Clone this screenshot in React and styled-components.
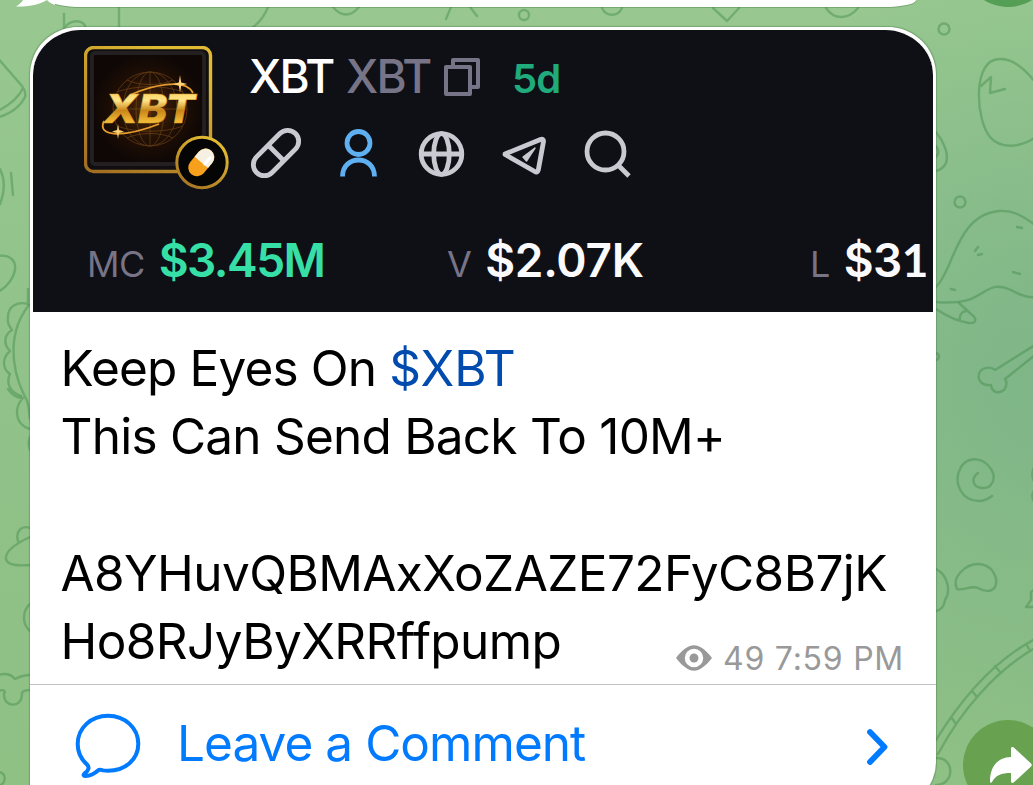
import styled, { createGlobalStyle } from "styled-components";

const GlobalStyle = createGlobalStyle`
  * {
    box-sizing: border-box;
  }

  body {
    margin: 0;
    overflow: hidden;
    font-family: "Inter", "Liberation Sans", sans-serif;
  }
`;

export default function App() {
  return (
    <>
      <GlobalStyle />
      <Chat>
        <Wallpaper />
        <PreviousBubble>
          <PreviousTail />
        </PreviousBubble>
        <ShareButton $top={-83} />
        <Bubble>
          <TokenCard>
            <TokenHeader>
              <TokenLogo />
              <TokenInfo>
                <TokenTitle>
                  <Ticker>XBT</Ticker>
                  <Ticker $muted>XBT</Ticker>
                  <CopyIcon />
                  <Age>5d</Age>
                </TokenTitle>
                <TokenLinks />
              </TokenInfo>
            </TokenHeader>
            <Stats>
              <Stat $width={360} $spacing="-1.5px" label="MC" value="$3.45M" $green />
              <Stat $width={363} $spacing="-0.3px" label="V" value="$2.07K" />
              <Stat
                $width={140}
                $spacing="-0.6px"
                label="L"
                value={
                  <>
                    $3<FootedDigit>1</FootedDigit>
                  </>
                }
              />
            </Stats>
          </TokenCard>
          <Message>
            <Line $spacing="-0.85px">
              Keep Eyes On <Cashtag>$XBT</Cashtag>
            </Line>
            <Line $spacing="-0.77px">This Can Send Back To 10M+</Line>
            <Line />
            <Line $spacing="-0.6px">A8YHuvQBMAxXoZAZE72FyC8B7jK</Line>
            <LastRow>
              <Line $spacing="-0.6px">Ho8RJyByXRRffpump</Line>
              <Meta>
                <EyeIcon />
                <span>49 7:59 PM</span>
              </Meta>
            </LastRow>
          </Message>
          <CommentBar>
            <CommentIcon />
            <CommentText>Leave a Comment</CommentText>
            <ChevronIcon />
          </CommentBar>
        </Bubble>
        <ShareButton $top={720}>
          <ShareIcon />
        </ShareButton>
      </Chat>
    </>
  );
}

function Stat({ label, value, $green, $width, $spacing }) {
  return (
    <StatItem $width={$width}>
      <StatLabel>{label}</StatLabel>
      <StatValue $green={$green} $spacing={$spacing}>
        {value}
      </StatValue>
    </StatItem>
  );
}

function Wallpaper() {
  return (
    <WallpaperSvg viewBox="0 0 1033 785">
      {/* top strip */}
      <path d="M64 14v14c8-10 20-8 22 0M119 7v20M268 7c-4 10-9 16-15 20M333 7c8 10 18 10 26 0" />
      <path d="M451 7l-5 12M470 7l7 9M602 8c4 9 16 9 20 0M713 8l14 13 12-13M826 8c8 12 22 12 32 0" />
      <circle cx="524" cy="15" r="5" />
      {/* left side */}
      <path d="M-4 56L22 86c3 4 4 7 3 11-5 10-14 17-29 21M23 88C18 99 8 106-4 112M0 169c5 10 5 22 0 35M11 173l2 22" />
      <path d="M-2 256c12-2 18 5 17 13-1 9-8 18-17 23" />
      <path d="M28 289v15c-10-3-20 2-20 13-1 6 1 9 4 13-8 5-9 14-2 21-8 7-8 17 0 23-4 8-1 18 11 22" />
      <path d="M29 305c-20 25-20 60-4 92 5 7 3 12 5 22M8 389c4 6 9 9 15 9-8 8-10 26 7 31" />
      <path d="M30 437c-2 5-2 8 0 13M30 528c-8-3-15 3-12 13M30 537C17 543 5 551 6 559c1 6 12 7 24 6M30 604c-8 7-8 20 0 27" />
      <path d="M-2 675c7-2 13-1 17 4 4-2 8-4 15-4M-2 691c6-2 8 0 6 3-1 13 17 15 18 1-1-3 2-5 8-5M-2 772c9 0 9 12 0 14" />
      {/* right side */}
      <circle cx="944" cy="29" r="5.5" />
      <circle cx="960" cy="202" r="5.5" />
      <path d="M1036 83c-14-18-29-27-42-23-21 7-18 60-4 77 12 14 33 9 46 0M981 86l10-9-1 16 15-4" />
      <path d="M936 132c8 10 13 22 10 31-2 4-6 7-10 8M936 146c3 4 3 8 0 11" />
      <path d="M936 287c18-17 20-72 63-76 14-1 24 5 36 14M936 302c12 1 30 1 41-6 14-8 18-13 34-6 9 5 16 8 24 7" />
      <path d="M975 251l3-4M978 255l4-1M1017 227l5 1M1013 272l7 2M951 289l4 1" />
      <path d="M936 309c9 6 19 12 33 14 8 1 8-5 2-9l-12-11M967 311c-5 0-8 4-7 9" />
      <path d="M1035 345l-40 25c-4-4-14-3-16 4-2 7 4 12 12 11 1 8 8 9 13 5 3-4 3-8 1-11l30-24" />
      <path d="M936 353c4 1 4 6 0 7" />
      <path d="M978 473c-7 5-6 14 4 15 10 1 15-10 9-19-7-11-22-14-30-2-9 16 1 34 18 34 5 0 9-2 13-5" />
      <path d="M957 589c-6-12 9-25 21-25 14 0 21 14 17 23-4 6-12 4-17 1-7-3-15 3-21 1z" />
      <path d="M936 569c12 6 15 22 9 31-1 7-4 10-9 11M1035 589l-4 3v8l-5 7h9M1035 466c-4 5-3 13 0 17M1035 490c-4 3-3 10 0 12" />
      <path d="M936 740c24-39 57-79 99-101M938 754c23-43 57-83 97-106M951 717l5 7M972 691l5 6M995 666l5 6M1026 644l3 5M936 758c19-1 19 27 0 27" />
    </WallpaperSvg>
  );
}

function PreviousTail() {
  return (
    <TailSvg viewBox="0 0 40 8">
      <path d="M8 0h32v5C35 3 34 2 32 0 26 4 14 7 1 6.500 5 4 7 2 8 0z" fill="#fff" />
    </TailSvg>
  );
}

function TokenLogo() {
  return (
    <LogoSvg viewBox="0 0 148 146">
      <defs>
        <linearGradient id="frame" x1="0" y1="1" x2="0.6" y2="0">
          <stop offset="0" stopColor="#a06c22" />
          <stop offset="1" stopColor="#e0ba32" />
        </linearGradient>
        <linearGradient id="gold" x1="0" y1="0" x2="0" y2="1">
          <stop offset="0" stopColor="#f5c243" />
          <stop offset="0.35" stopColor="#ffe588" />
          <stop offset="0.55" stopColor="#c98518" />
          <stop offset="0.8" stopColor="#f5be38" />
          <stop offset="1" stopColor="#fff0a8" />
        </linearGradient>
        <radialGradient id="glow">
          <stop offset="0" stopColor="#4e2a0a" />
          <stop offset="0.55" stopColor="#221005" />
          <stop offset="1" stopColor="#0e0705" />
        </radialGradient>
      </defs>
      <rect x="1.500" y="1.500" width="125" height="124" rx="8" fill="#100e10" stroke="url(#frame)" strokeWidth="3.400" />
      <rect x="8" y="7" width="112" height="111" rx="3" fill="url(#glow)" stroke="#242021" strokeWidth="3.800" />
      <g fill="none" stroke="#a4641f" strokeWidth="0.900" opacity="0.450">
        <circle cx="66" cy="63" r="37" />
        <ellipse cx="66" cy="63" rx="14" ry="37" />
        <ellipse cx="66" cy="63" rx="27" ry="37" />
        <path d="M66 26v74M29 63h74M33 46c18-7 48-7 66 0M33 80c18 7 48 7 66 0M43 34c12 6 34 6 46 0M43 92c12-6 34-6 46 0" />
      </g>
      <path d="M46 49c20-9 55-18 63-2M20 75c-8 17 22 16 55 3" fill="none" stroke="#e59b2d" strokeWidth="1.800" />
      <text
        x="20"
        y="76.500"
        fontFamily="Inter, sans-serif"
        fontSize="40"
        fontWeight="800"
        fontStyle="italic"
        textLength="91"
        lengthAdjust="spacingAndGlyphs"
        fill="url(#gold)"
        stroke="#d99a2a"
        strokeWidth="0.500"
      >
        XBT
      </text>
      <path d="M96 29l1.200 7.500 6 1.500-6 1.500-1.200 7-1.200-7-6-1.500 6-1.500zM34 78l1 6 5 1.500-5 1.500-1 6-1-6-5-1.500 5-1.500z" fill="#ffd273" />
      <circle cx="118" cy="116.500" r="25.200" fill="#060506" stroke="url(#frame)" strokeWidth="3" />
      <g transform="rotate(40 117.500 116.500)">
        <rect x="108.500" y="101" width="17.500" height="31" rx="8.750" fill="#f6a01b" />
        <path d="M108.500 116.500v-6.500a8.750 8.750 0 0 1 17.500 0v6.500z" fill="#f5f0e2" />
        <path d="M121 107.500v8" stroke="#fff" strokeWidth="3" strokeLinecap="round" />
      </g>
    </LogoSvg>
  );
}

function CopyIcon() {
  return (
    <CopySvg viewBox="0 0 38 40">
      <path d="M10 9V3h25v27h-8M3 10h24v27H3z" />
    </CopySvg>
  );
}

/* pill, creator, website, telegram and search */
function TokenLinks() {
  return (
    <LinksSvg viewBox="0 0 384 54">
      <g transform="rotate(45 27 27)">
        <rect x="16" y="-0.500" width="22" height="55" rx="11" />
        <path d="M16 27h22" />
      </g>
      <g stroke="#5eb0f0">
        <circle cx="109.500" cy="17" r="11.500" />
        <path d="M93.500 50.500c0-22 32-22 32 0" />
      </g>
      <g>
        <circle cx="192.500" cy="28" r="20.300" />
        <ellipse cx="192.500" cy="28" rx="7.800" ry="20.300" />
        <path d="M172 28h41" />
      </g>
      <g strokeLinejoin="round">
        <path d="M256 28l35.500-14.500c2-.8 3.200 0 3 2l-5.200 28.500c-.5 2.200-2 2.500-3.500 1.500L256 28.500z" />
        <path d="M286 22l-12 9 3.500 4z" fill="#c9c9d1" strokeWidth="1.400" />
      </g>
      <g>
        <circle cx="356.500" cy="25.500" r="18.500" />
        <path d="M369 39l11 11" />
      </g>
    </LinksSvg>
  );
}

function EyeIcon() {
  return (
    <svg width="36" height="26" viewBox="0 0 37 26">
      <path
        fill="#999"
        fillRule="evenodd"
        d="M0 13C7 4 13 0 18.500 0S30 4 37 13c-7 9-13 13-18.500 13S7 22 0 13zM18.500 3.500a9.500 9.500 0 1 0 0 19 9.500 9.500 0 0 0 0-19z"
      />
      <circle cx="18.500" cy="13" r="4.600" fill="#999" />
    </svg>
  );
}

function CommentIcon() {
  return (
    <svg width="66" height="66" viewBox="0 0 66 66" fill="none">
      <path
        d="M33 2.700C16 2.700 2.700 15 2.700 31c0 8.500 3.700 15.500 9.300 20.500 3 3 1.300 6.500-2.500 9-1.500 1.200-1 2.800 1 2.600 5-.4 9.500-3 12.500-5.700 1.500-1.300 3-.6 5 0 1.600.3 3.300.4 5 .4 17 0 30.300-11.300 30.300-27S50 2.700 33 2.700z"
        stroke="#007aff"
        strokeWidth="4"
      />
    </svg>
  );
}

function ChevronIcon() {
  return (
    <svg width="24" height="38" viewBox="0 0 24 38" fill="none">
      <path d="M4 5l14.500 15L4 35" stroke="#007aff" strokeWidth="5.800" strokeLinecap="round" strokeLinejoin="round" />
    </svg>
  );
}

function ShareIcon() {
  return (
    <ShareSvg viewBox="0 0 42 37">
      <path
        fill="#fff"
        d="M21 1.500c0-1.700 1.500-2 2.800-1L41 16.500c1 1 1 2 0 3L24 35.300c-1.500 1.200-3 .8-3-1V26C11 26 6 28 2 35c-.8 1.300-2 1-2-.6C0 20 7 10.500 21 10z"
      />
    </ShareSvg>
  );
}

const Chat = styled.div`
  position: relative;
  width: 1033px;
  height: 785px;
  overflow: hidden;
  background:
    radial-gradient(circle at 1060px 380px, #7eb588 0, rgba(126, 181, 136, 0) 420px),
    linear-gradient(180deg, #98c890 0%, #90c28a 45%, #8fc084 100%);
`;

const WallpaperSvg = styled.svg`
  position: absolute;
  top: 0;
  left: 0;
  width: 1033px;
  height: 785px;
  fill: none;
  stroke: #438b4c;
  stroke-opacity: 0.45;
  stroke-width: 2.4;
  stroke-linecap: round;
  stroke-linejoin: round;
`;

const PreviousBubble = styled.div`
  position: relative;
  width: 866px;
  height: 7px;
  margin-left: 50px;
  background-color: #fff;
  border-radius: 0 0 32px 32px / 0 0 7px 7px;
  box-shadow: 0 1px 0 rgba(70, 120, 65, 0.4);
`;

const TailSvg = styled.svg`
  position: absolute;
  top: 0;
  left: -35px;
  width: 40px;
  height: 8px;
`;

const Bubble = styled.div`
  position: relative;
  width: 906px;
  height: 780px;
  margin: 20px 0 0 30px;
  background-color: #fff;
  border-radius: 48px 48px 45px 0;
  box-shadow: 0 0 1px 0.5px rgba(60, 110, 60, 0.35);
`;

const TokenCard = styled.div`
  height: 285px;
  margin: 0 3px;
  border-top: 3px solid #fff;
  border-radius: 48px 48px 0 0;
  background-color: #0f1015;
  overflow: hidden;
`;

const TokenHeader = styled.div`
  display: flex;
  padding: 16px 0 0 51px;
`;

const LogoSvg = styled.svg`
  flex: none;
  width: 148px;
  height: 146px;
`;

const TokenInfo = styled.div`
  padding-left: 17px;
`;

const TokenTitle = styled.div`
  display: flex;
  align-items: baseline;
  height: 80px;
  line-height: 60px;
`;

const Ticker = styled.span`
  width: 97px;
  color: ${({ $muted }) => ($muted ? "#777487" : "#fff")};
  font-size: 46px;
  font-weight: 500;
  letter-spacing: -1.8px;
`;

const CopySvg = styled.svg`
  width: 38px;
  height: 40px;
  position: relative;
  top: 4px;
  fill: none;
  stroke: #777487;
  stroke-width: 4;
  stroke-linejoin: round;
`;

const Age = styled.span`
  margin-left: 31px;
  color: #1fab7c;
  font-size: 40px;
  font-weight: 600;
  letter-spacing: -0.8px;
`;

const LinksSvg = styled.svg`
  display: block;
  width: 384px;
  height: 54px;
  fill: none;
  stroke: #c9c9d1;
  stroke-width: 4.8;
`;

const Stats = styled.div`
  display: flex;
  align-items: baseline;
  padding: 38px 0 0 54px;
  line-height: 60px;
`;

const StatItem = styled.div`
  display: flex;
  flex: none;
  align-items: baseline;
  gap: 14px;
  width: ${({ $width }) => $width}px;
`;

const StatLabel = styled.span`
  color: #777487;
  font-size: 36px;
  letter-spacing: -0.6px;
`;

const StatValue = styled.span`
  color: ${({ $green }) => ($green ? "#36dfa6" : "#fafafc")};
  font-size: 46px;
  font-weight: 600;
  letter-spacing: ${({ $spacing }) => $spacing};
`;

const FootedDigit = styled.span`
  font-family: "Lato", sans-serif;
  font-weight: 700;
  line-height: 1;
`;

const Message = styled.div`
  height: 372px;
  padding: 22px 32px 0 30.5px;
`;

const Line = styled.div`
  height: 68.3px;
  color: #000;
  font-size: 49.5px;
  line-height: 68.3px;
  letter-spacing: ${({ $spacing }) => $spacing};
  white-space: nowrap;
`;

const Cashtag = styled.span`
  color: #004bad;
  letter-spacing: 0;
`;

const LastRow = styled.div`
  display: flex;
  justify-content: space-between;
`;

const Meta = styled.div`
  display: flex;
  align-items: center;
  gap: 11px;
  height: 40px;
  margin-top: 31px;
  color: #999;
  font-size: 32px;
  letter-spacing: 0.75px;
`;

const CommentBar = styled.div`
  display: flex;
  align-items: center;
  height: 122px;
  padding: 0 46px 0 45px;
  border-top: 1px solid #c3c3c6;
`;

const CommentText = styled.div`
  flex: 1;
  margin-left: 36px;
  padding-bottom: 5px;
  color: #007aff;
  font-size: 49.5px;
  letter-spacing: -0.95px;
`;

const ShareButton = styled.div`
  position: absolute;
  top: ${({ $top }) => $top}px;
  left: 963px;
  width: 90px;
  height: 90px;
  padding: 27px 0 0 27px;
  border-radius: 50%;
  background-color: ${({ $top }) => ($top < 0 ? "#559e55" : "#68a251")};
`;

const ShareSvg = styled.svg`
  display: block;
  width: 42px;
  height: 37px;
`;
